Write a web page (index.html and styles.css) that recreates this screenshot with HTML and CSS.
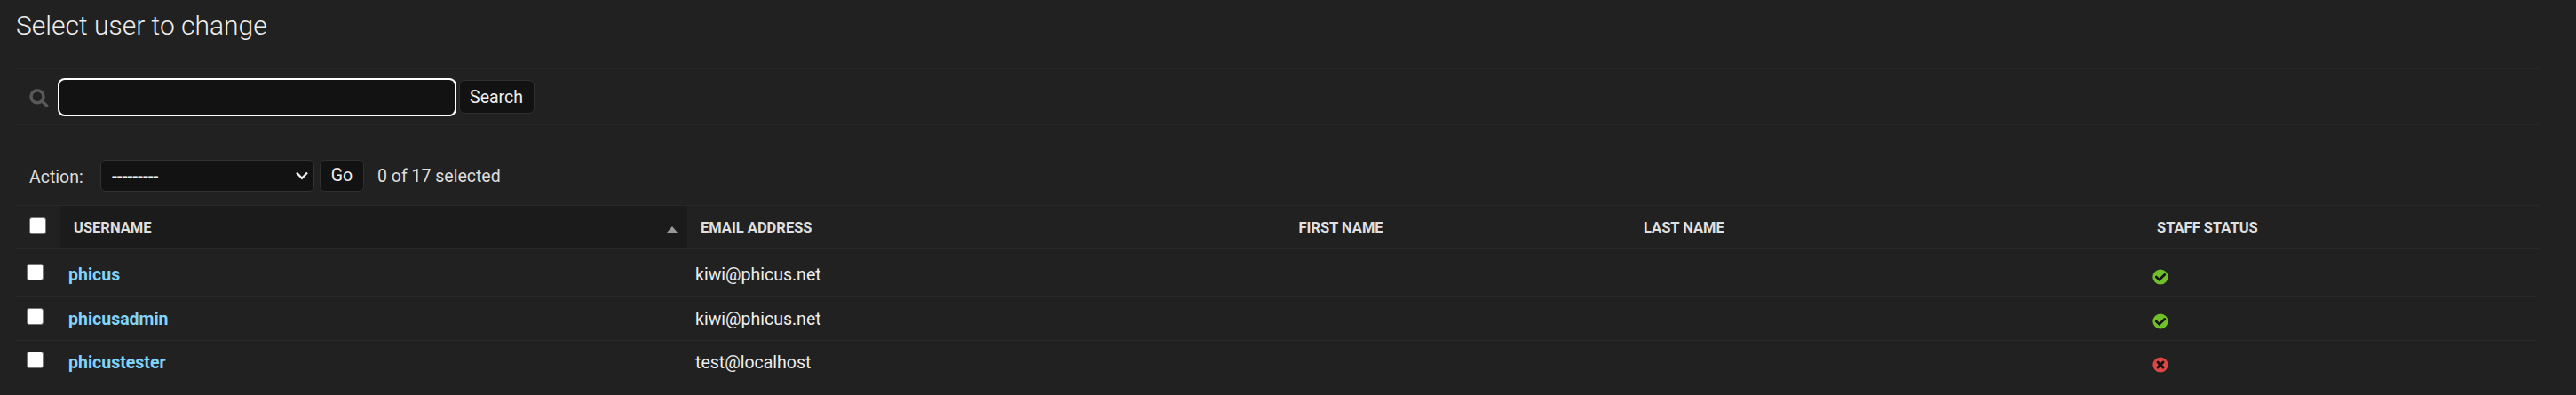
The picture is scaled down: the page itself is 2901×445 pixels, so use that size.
FILE: index.html
```html
<!DOCTYPE html>
<html lang="en">
<head>
<meta charset="utf-8">
<title>Select user to change</title>
<link rel="stylesheet" href="styles.css">
</head>
<body>
<main class="content">
  <h1 class="title">Select user to change</h1>
  <form class="toolbar">
    <svg class="search-icon" viewBox="0 0 22 22"><circle cx="9" cy="8.8" r="7"/><path d="M14.4 14L19.6 19"/></svg>
    <input class="search-input" type="text" aria-label="Search">
    <button class="button search-button" type="button">Search</button>
  </form>
  <div class="actions">
    <span class="action-label">Action:</span>
    <div class="select"><span class="dashes">---------</span><svg class="chevron" viewBox="0 0 14 10"><path d="M1 1.5L7 7.8L13 1.5"/></svg></div>
    <button class="button go-button" type="button">Go</button>
    <span class="counter">0 of 17 selected</span>
  </div>
  <div class="table">
    <div class="row head">
      <div class="check"><i class="box"></i></div>
      <div class="sorted"><span>Username</span><i class="arrow"></i></div>
      <div>Email address</div>
      <div>First name</div>
      <div>Last name</div>
      <div>Staff status</div>
    </div>
    <div class="row first">
      <div class="check"><i class="box"></i></div>
      <div class="user">phicus</div>
      <div>kiwi@phicus.net</div>
      <div></div>
      <div></div>
      <div><svg class="status yes" viewBox="0 0 18 18"><circle cx="9" cy="9" r="8.6"/><path d="M4.2 9L7.7 12.3L13.9 6.3"/></svg></div>
    </div>
    <div class="row">
      <div class="check"><i class="box"></i></div>
      <div class="user">phicusadmin</div>
      <div>kiwi@phicus.net</div>
      <div></div>
      <div></div>
      <div><svg class="status yes" viewBox="0 0 18 18"><circle cx="9" cy="9" r="8.6"/><path d="M4.2 9L7.7 12.3L13.9 6.3"/></svg></div>
    </div>
    <div class="row last">
      <div class="check"><i class="box"></i></div>
      <div class="user">phicustester</div>
      <div>test@localhost</div>
      <div></div>
      <div></div>
      <div><svg class="status no" viewBox="0 0 18 18"><circle cx="9" cy="9" r="8.6"/><path d="M6 6L12 12M12 6L6 12"/></svg></div>
    </div>
  </div>
</main>
</body>
</html>
```
FILE: styles.css
```css
* { box-sizing: border-box; }
body {
  margin: 0;
  height: 445px;
  overflow: hidden;
  background: #212121;
  color: #eee;
  font: 19.5px/24px Roboto, "Liberation Sans", sans-serif;
}
.content { padding: 10px 41px 0 18px; }
.title { margin: 0; height: 67px; font-size: 30px; line-height: 37px; font-weight: 300; }
.toolbar {
  display: flex;
  align-items: center;
  height: 64px;
  padding-left: 15px;
  border-top: 1px solid #272727;
  border-bottom: 1px solid #272727;
}
.search-icon { width: 22px; height: 22px; margin-top: 3px; fill: none; stroke: #585858; stroke-width: 3.6; stroke-linecap: round; }
.search-input {
  width: 449px;
  height: 43px;
  margin: 0 3px 0 9.5px;
  border: 2px solid #fff;
  border-radius: 8px;
  outline: none;
  background: #121212;
  color: #eee;
}
.button {
  padding: 0;
  border: 1px solid #2f2f2f;
  border-radius: 6px;
  background: #121212;
  color: #eee;
  font: inherit;
}
.search-button { width: 85px; height: 38px; padding-top: 1px; }
.actions { display: flex; align-items: center; height: 90px; padding: 24px 0 0 15px; }
.action-label { width: 80px; color: #ddd; padding-top: 3px; }
.select {
  display: flex;
  align-items: center;
  justify-content: space-between;
  width: 241px;
  height: 36px;
  margin-right: 6px;
  padding: 0 6px 0 12px;
  border: 1px solid #333;
  border-radius: 6px;
  background: #121212;
}
.dashes { padding-top: 2px; transform: scaleX(1.08); transform-origin: left; }
.chevron { width: 14px; height: 10px; fill: none; stroke: #eee; stroke-width: 2.4; }
.go-button { width: 50px; height: 36px; margin-right: 15px; }
.counter { color: #ddd; padding-top: 1px; }
.row {
  display: grid;
  grid-template-columns: 50px 706px 673.5px 388.5px 578px 1fr;
  height: 49px;
  margin: 0 4px 0 0;
  border-bottom: 1px solid #282828;
}
.row > div { padding: 13px 10px 0 9px; }
.row > .check { padding: 12px 0 0 12px; }
.row.first { height: 55px; }
.row.first > div { padding-top: 18px; }
.row.first > .check { padding-top: 17px; }
.row.last { border-bottom: 0; }
.row.head {
  height: 49px;
  margin: 0;
  border-top: 1px solid #282828;
  color: #e0e0e0;
  font-size: 16.5px;
  font-weight: 700;
  text-transform: uppercase;
}
.row.head > div { padding: 13px 11px 0 15px; }
.row.head > .check { padding-top: 13px; }
.user { color: #81d4fa; font-weight: 700; }
.sorted { display: flex; justify-content: space-between; background: #1b1b1b; }
.arrow {
  width: 0;
  height: 0;
  margin-top: 10px;
  border: solid transparent;
  border-width: 0 6.5px 7px;
  border-bottom-color: #999;
}
.box {
  display: block;
  width: 19px;
  height: 19px;
  border: 1.5px solid #767676;
  border-radius: 3px;
  background: #fff;
}
.status { display: block; width: 18px; height: 18px; margin: 4.5px 0 0 1px; fill: none; stroke: #121212; stroke-width: 2.6; stroke-linecap: round; }
.status.yes circle { fill: #70bf2b; stroke: none; }
.status.no circle { fill: #dd4646; stroke: none; }
.status.no path { stroke-width: 3; }
```
